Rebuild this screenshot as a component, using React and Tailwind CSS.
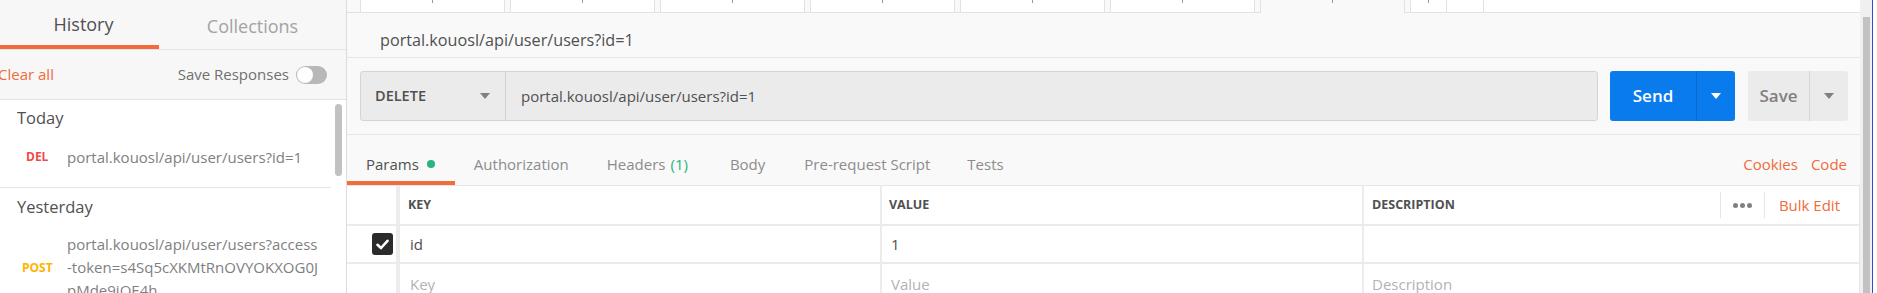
// Postman-like request builder

const Caret = ({ className }) => (
  <svg width="10" height="6" viewBox="0 0 10 6" className={className}>
    <path d="M0 0 L10 0 L5 6 Z" fill="currentColor" />
  </svg>
);

function Sidebar() {
  return (
    <div className="flex h-full w-[347px] shrink-0 flex-col border-r border-[#dcdcdc] bg-[#f7f7f7]">
      {/* tabs */}
      <div className="flex h-[50px] shrink-0 border-b border-[#e4e4e4]">
        <div className="flex w-[159px] items-center justify-center border-b-4 border-[#f26b3a] pl-[8px] pt-[4px] text-[18px] text-[#505050]">
          History
        </div>
        <div className="flex flex-1 items-center justify-center pt-[4px] text-[18px] text-[#a3a3a3]">
          Collections
        </div>
      </div>

      {/* clear / save responses */}
      <div className="flex h-[50px] shrink-0 items-center justify-between border-b border-[#e4e4e4] pr-[19px]">
        <span className="-ml-[2px] text-[15px] text-[#f26b3a]">Clear all</span>
        <div className="flex items-center gap-[7px]">
          <span className="text-[15px] text-[#707070]">Save Responses</span>
          <div className="flex h-[18px] w-[31px] items-center rounded-full bg-[#b8b8b8] px-[1px]">
            <div className="h-[16px] w-[16px] rounded-full bg-white" />
          </div>
        </div>
      </div>

      {/* history list */}
      <div className="flex flex-1 overflow-hidden bg-white">
        <div className="w-[331px] shrink-0">
          <div className="border-b border-[#e6e6e6]">
            <div className="pl-[17px] pt-[7px] text-[16.5px] leading-[22px] text-[#505050]">Today</div>
            <div className="mb-[19px] mt-[17px] flex items-center leading-[22px]">
              <span className="w-[67px] pl-[26px] text-[12px] font-bold text-[#ed4b48]">DEL</span>
              <span className="text-[15px] text-[#808080]">portal.kouosl/api/user/users?id=1</span>
            </div>
          </div>
          <div className="pl-[17px] pt-[8px] text-[16.5px] leading-[22px] text-[#505050]">Yesterday</div>
          <div className="mt-[15px] flex items-center">
            <span className="w-[67px] pl-[22px] text-[12px] font-bold text-[#ffb400]">POST</span>
            <div className="text-[15px] leading-[23px] text-[#808080]">
              <div>portal.kouosl/api/user/users?access</div>
              <div>-token=s4Sq5cXKMtRnOVYOKXOG0J</div>
              <div>pMde9jQE4h</div>
            </div>
          </div>
        </div>
        <div className="flex flex-1 justify-center pt-[4px]">
          <div className="h-[72px] w-[7px] rounded-full bg-[#c1c1c1]" />
        </div>
      </div>
    </div>
  );
}

function TopTabs() {
  const tabs = [0, 1, 2, 3, 4, 5];
  return (
    <div className="flex h-[13px] shrink-0 border-b border-[#e2e2e2] bg-[#f9f9f9] pl-[13px]">
      {tabs.map((t) => (
        <div key={t} className="mr-[5px] flex h-full w-[145px] justify-center border-x border-[#e2e2e2] bg-white">
          <div className="h-[3px] w-px bg-[#9a9a9a]" />
        </div>
      ))}
      <div className="-mb-px mr-[5px] flex h-[13px] w-[145px] justify-center border-x border-[#e2e2e2] bg-[#f9f9f9]">
        <div className="h-[3px] w-px bg-[#9a9a9a]" />
      </div>
      <div className="flex h-full w-[37px] justify-center border-x border-[#e2e2e2] bg-white">
        <div className="h-[3px] w-px bg-[#9a9a9a]" />
      </div>
      <div className="h-full w-[37px] border-r border-[#e2e2e2] bg-white" />
      <div className="h-full flex-1 bg-white" />
    </div>
  );
}

function UrlBar() {
  return (
    <div className="flex h-[77px] shrink-0 items-center border-b border-[#e6e6e6] pl-[13px] pr-[12px]">
      <div className="flex h-[50px] w-[1238px] rounded-[3px] border border-[#d4d4d4] bg-[#ebebeb]">
        <div className="flex w-[145px] items-center justify-between border-r border-[#d4d4d4] pl-[14px] pr-[15px]">
          <span className="text-[14.5px] font-semibold text-[#505050]">DELETE</span>
          <Caret className="text-[#808080]" />
        </div>
        <div className="flex flex-1 items-center pl-[15px] text-[15px] text-[#505050]">
          portal.kouosl/api/user/users?id=1
        </div>
      </div>
      <div className="ml-[12px] flex h-[50px] w-[125px] rounded-[3px] bg-[#097bed] text-white">
        <div className="flex w-[87px] items-center justify-center border-r border-[#0868cc] text-[17px] font-semibold">
          Send
        </div>
        <div className="flex flex-1 items-center justify-center">
          <Caret className="text-white" />
        </div>
      </div>
      <div className="ml-[13px] flex h-[50px] w-[100px] rounded-[3px] bg-[#ebebeb] text-[#808080]">
        <div className="flex w-[62px] items-center justify-center border-r border-[#d6d6d6] text-[17px] font-semibold">
          Save
        </div>
        <div className="flex flex-1 items-center justify-center">
          <Caret className="text-[#808080]" />
        </div>
      </div>
    </div>
  );
}

function RequestTabs() {
  return (
    <div className="flex h-[50px] shrink-0 items-stretch pr-[13px] text-[15px]">
      <div className="flex items-center border-b-4 border-[#f26b3a] pl-[19px] pr-[20px] pt-[12px] text-[#505050]">
        Params
        <span className="ml-[8px] h-[8px] w-[8px] rounded-full bg-[#26b47f]" />
      </div>
      <div className="flex items-center px-[19px] pt-[8px] text-[#8c8c8c]">Authorization</div>
      <div className="flex items-center px-[19px] pt-[8px] text-[#8c8c8c]">
        Headers<span className="ml-[5px] text-[#26b47f]">(1)</span>
      </div>
      <div className="ml-[4px] flex items-center px-[19px] pt-[8px] text-[#8c8c8c]">Body</div>
      <div className="ml-[1px] flex items-center px-[19px] pt-[8px] text-[#8c8c8c]">Pre-request Script</div>
      <div className="flex items-center px-[18px] pt-[8px] text-[#8c8c8c]">Tests</div>
      <div className="ml-auto flex items-center gap-[13px] pt-[8px] text-[#f26b3a]">
        <span>Cookies</span>
        <span>Code</span>
      </div>
    </div>
  );
}

function ParamsTable() {
  return (
    <div className="border-r border-t border-[#e6e6e6] bg-white text-[15px]">
      <div className="flex h-[40px] border-b-2 border-[#ebebeb]">
        <div className="w-[53px] border-r-4 border-[#ececec]" />
        <div className="flex w-[482px] items-center border-r-2 border-[#ececec] pl-[8px] text-[12.5px] font-bold text-[#505050]">KEY</div>
        <div className="flex w-[482px] items-center border-r-2 border-[#ececec] pl-[7px] text-[12.5px] font-bold text-[#505050]">VALUE</div>
        <div className="flex flex-1 items-center pl-[8px]">
          <span className="text-[12.5px] font-bold text-[#505050]">DESCRIPTION</span>
          <div className="ml-auto flex h-full items-center">
            <div className="flex h-[26px] items-center border-x border-[#e6e6e6] px-[12px]">
              <span className="flex gap-[2px]">
                <span className="h-[5px] w-[5px] rounded-full bg-[#808080]" />
                <span className="h-[5px] w-[5px] rounded-full bg-[#808080]" />
                <span className="h-[5px] w-[5px] rounded-full bg-[#808080]" />
              </span>
            </div>
            <span className="pl-[14px] pr-[19px] text-[#f26b3a]">Bulk Edit</span>
          </div>
        </div>
      </div>
      <div className="flex h-[38px] border-b-2 border-[#ebebeb]">
        <div className="flex w-[53px] items-center justify-end border-r-4 border-[#ececec] pr-[3px]">
          <div className="flex h-[22px] w-[21px] items-center justify-center rounded-[3px] bg-[#2b2b2b]">
            <svg width="13" height="11" viewBox="0 0 13 11">
              <path d="M1.5 5.8 L5 9 L11.5 1.8" fill="none" stroke="white" strokeWidth="2.6" strokeLinecap="round" strokeLinejoin="round" />
            </svg>
          </div>
        </div>
        <div className="flex w-[482px] items-center border-r-2 border-[#ececec] pl-[10px] text-[#505050]">id</div>
        <div className="flex w-[482px] items-center border-r-2 border-[#ececec] pl-[9px] text-[#505050]">1</div>
        <div className="flex-1" />
      </div>
      <div className="flex h-[40px]">
        <div className="w-[53px] border-r-4 border-[#ececec]" />
        <div className="flex w-[482px] items-center border-r-2 border-[#ececec] pl-[10px] text-[#b3b3b3]">Key</div>
        <div className="flex w-[482px] items-center border-r-2 border-[#ececec] pl-[9px] text-[#b3b3b3]">Value</div>
        <div className="flex flex-1 items-center pl-[8px] text-[#b3b3b3]">Description</div>
      </div>
    </div>
  );
}

export default function App() {
  return (
    <div className="flex h-[293px] w-[1877px] overflow-hidden bg-white font-['Open_Sans',sans-serif]">
      <Sidebar />
      <div className="flex w-[1513px] shrink-0 flex-col bg-[#f9f9f9]">
        <TopTabs />
        <div className="flex h-[45px] shrink-0 border-b border-[#e6e6e6] pl-[33px] pt-[16px] text-[16.2px] font-medium leading-[22px] text-[#505050]">
          portal.kouosl/api/user/users?id=1
        </div>
        <UrlBar />
        <RequestTabs />
        <ParamsTable />
      </div>
      <div className="flex w-[17px] shrink-0">
        <div className="flex w-[12px] justify-end bg-[#f0f0f0] pr-[2px] pt-[17px]">
          <div className="h-full w-[7px] bg-[#c2c2c2]" />
        </div>
        <div className="w-px bg-[#3b48d6]" />
        <div className="flex-1 bg-white" />
      </div>
    </div>
  );
}
